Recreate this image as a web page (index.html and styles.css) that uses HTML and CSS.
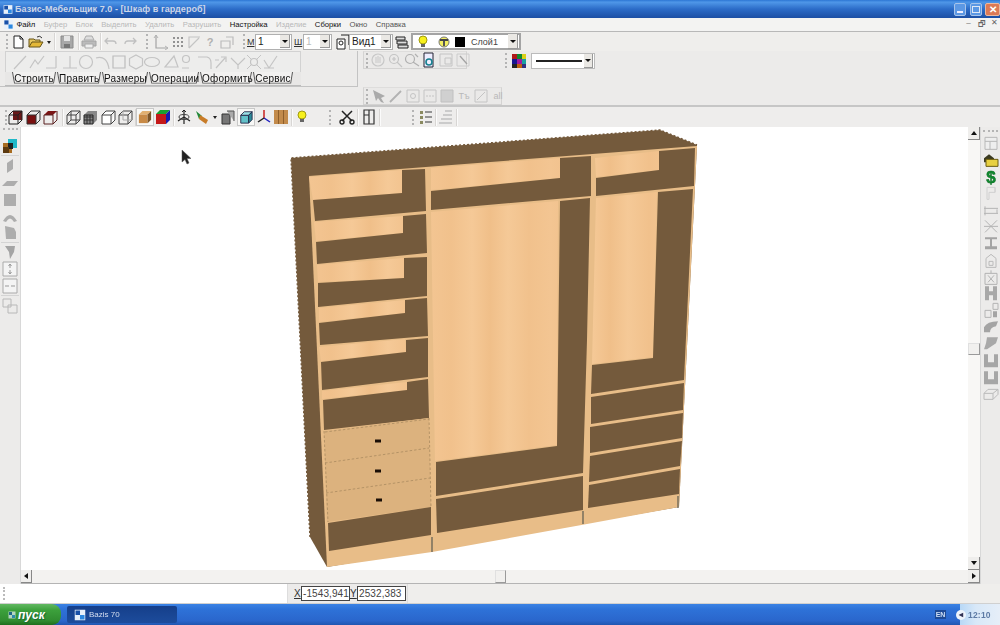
FILE: index.html
```html
<!DOCTYPE html>
<html lang="ru">
<head>
<meta charset="utf-8">
<title>Базис-Мебельщик 7.0</title>
<link rel="stylesheet" href="styles.css">
</head>
<body>
<svg class="defs" width="0" height="0">
  <defs>
    <symbol id="new" viewBox="0 0 16 16"><path d="M4 2h6l3 3v9H4z" fill="#fff" stroke="#222"/><path d="M10 2v3h3" fill="none" stroke="#222"/></symbol>
    <symbol id="open" viewBox="0 0 16 16"><path d="M1 13V5h5l1 1h5v2" fill="#e8c860" stroke="#665518"/><path d="M1 13l3-5h11l-3 5z" fill="#e4b838" stroke="#665518"/><path d="M9 3q3-2 5 1" fill="none" stroke="#333"/></symbol>
    <symbol id="save" viewBox="0 0 16 16"><path d="M2 2h12v12H2z" fill="#a8a8a8" stroke="#8a8a8a"/><path d="M5 2h6v5H5z" fill="#e4e4e4"/><path d="M5 10h6v4H5z" fill="#777"/></symbol>
    <symbol id="print" viewBox="0 0 16 16"><path d="M5 2h6l2 4H3z" fill="#ddd" stroke="#aaa"/><path d="M1 7h14v5H1z" fill="#bbb" stroke="#a4a4a4"/><path d="M4 10h8v4H4z" fill="#eee" stroke="#aaa"/></symbol>
    <symbol id="undo" viewBox="0 0 16 16"><path d="M5 4L2 7l3 3M3 7h7q3 0 3 3" fill="none" stroke="#c0c0c0" stroke-width="1.3"/></symbol>
    <symbol id="redo" viewBox="0 0 16 16"><path d="M11 4l3 3-3 3M13 7H6q-3 0-3 3" fill="none" stroke="#c0c0c0" stroke-width="1.3"/></symbol>
    <symbol id="axes" viewBox="0 0 16 16"><path d="M3 1v13h12" fill="none" stroke="#a4a4a4" stroke-width="1.2"/><path d="M1 4l2-3 2 3M12 12l3 2-3 2" fill="none" stroke="#b4b4b4"/></symbol>
    <symbol id="grid" viewBox="0 0 16 16"><path d="M3 3h2v2H3zm4 0h2v2H7zm4 0h2v2h-2zM3 7h2v2H3zm4 0h2v2H7zm4 0h2v2h-2zM3 11h2v2H3zm4 0h2v2H7zm4 0h2v2h-2z" fill="#929292"/></symbol>
    <symbol id="angle" viewBox="0 0 16 16"><path d="M3 14V3h11M3 14L13 4" fill="none" stroke="#c4c4c4" stroke-width="1.2"/></symbol>
    <symbol id="boxes" viewBox="0 0 16 16"><path d="M2 7h9v7H2zM7 3h7v8" fill="none" stroke="#bcbcbc" stroke-width="1.2"/></symbol>
    <symbol id="copyv" viewBox="0 0 16 16"><path d="M2 5h8v10H2z" fill="#fff" stroke="#222"/><path d="M6 1h8v10" fill="none" stroke="#222" stroke-width="1.2"/><circle cx="6" cy="9" r="2" fill="none" stroke="#222"/></symbol>
    <symbol id="layers" viewBox="0 0 16 16"><path d="M2 3h9v3H2zM3 7h10v3H3zM4 11h10v3H4z" fill="#ddd" stroke="#222"/></symbol>
    <symbol id="bulb" viewBox="0 0 16 16"><circle cx="8" cy="6" r="4" fill="#f7f01c" stroke="#a09a10"/><path d="M6 10h4v3H6z" fill="#666"/></symbol>
    <symbol id="bulb2" viewBox="0 0 16 16"><circle cx="8" cy="8" r="5" fill="#f3ee60" stroke="#777"/><path d="M4 5h8v2H4z" fill="#444"/><path d="M7 7h2v5H7z" fill="#555"/></symbol>
    <symbol id="black" viewBox="0 0 16 16"><path d="M3 3h10v10H3z" fill="#000"/></symbol>
    <symbol id="palette" viewBox="0 0 16 16"><path d="M1 1h5v5H1z" fill="#b01818"/><path d="M6 1h5v5H6z" fill="#108830"/><path d="M11 1h4v5h-4z" fill="#dcd018"/><path d="M1 6h5v5H1z" fill="#161690"/><path d="M6 6h5v5H6z" fill="#a018a0"/><path d="M11 6h4v5h-4z" fill="#18a0a0"/><path d="M1 11h5v4H1z" fill="#222"/><path d="M6 11h5v4H6z" fill="#c06010"/><path d="M11 11h4v4h-4z" fill="#303080"/></symbol>
    <symbol id="t-line" viewBox="0 0 16 16"><path d="M2 15L14 2" fill="none" stroke="#c4c4c4" stroke-width="1.2"/></symbol>
    <symbol id="t-zig" viewBox="0 0 16 16"><path d="M1 14l5-8 3 4 6-8" fill="none" stroke="#c4c4c4" stroke-width="1.2"/></symbol>
    <symbol id="t-under" viewBox="0 0 16 16"><path d="M1 14h10M11 2v12" fill="none" stroke="#c4c4c4" stroke-width="1.2"/></symbol>
    <symbol id="t-perp" viewBox="0 0 16 16"><path d="M1 14h14M8 2v12" fill="none" stroke="#c4c4c4" stroke-width="1.2"/></symbol>
    <symbol id="t-circ" viewBox="0 0 16 16"><circle cx="8" cy="8" r="6.5" fill="none" stroke="#c4c4c4" stroke-width="1.2"/></symbol>
    <symbol id="t-arc" viewBox="0 0 16 16"><path d="M1 4q11-3 13 11" fill="none" stroke="#c4c4c4" stroke-width="1.2"/></symbol>
    <symbol id="t-sq" viewBox="0 0 16 16"><path d="M2 2h12v12H2z" fill="none" stroke="#bcbcbc" stroke-width="1.2"/></symbol>
    <symbol id="t-hex" viewBox="0 0 16 16"><path d="M8 1l6.500 3.500v7L8 15l-6.500-3.500v-7z" fill="none" stroke="#c4c4c4" stroke-width="1.2"/></symbol>
    <symbol id="t-ell" viewBox="0 0 16 16"><ellipse cx="8" cy="8" rx="7.500" ry="4.500" fill="none" stroke="#c4c4c4" stroke-width="1.2"/></symbol>
    <symbol id="t-poly" viewBox="0 0 16 16"><path d="M1 13L10 2l4 11z" fill="none" stroke="#c4c4c4" stroke-width="1.2"/></symbol>
    <symbol id="t-sm" viewBox="0 0 16 16"><circle cx="6" cy="5" r="3.500" fill="none" stroke="#c4c4c4" stroke-width="1.2"/><path d="M2 14h7" stroke="#c4c4c4"/></symbol>
    <symbol id="t-cor" viewBox="0 0 16 16"><path d="M1 3h9q4 1 4 6v6" fill="none" stroke="#c4c4c4" stroke-width="1.2"/></symbol>
    <symbol id="t-ar" viewBox="0 0 16 16"><path d="M3 14L12 4M8 3h5v5M2 6h4" fill="none" stroke="#c4c4c4" stroke-width="1.2"/></symbol>
    <symbol id="t-y" viewBox="0 0 16 16"><path d="M1 4l7 7 7-7M8 11v4" fill="none" stroke="#c4c4c4" stroke-width="1.2"/></symbol>
    <symbol id="t-star" viewBox="0 0 16 16"><circle cx="8" cy="8" r="3.500" fill="none" stroke="#c4c4c4" stroke-width="1.2"/><path d="M1 1l4 4M15 1l-4 4M1 15l4-4M15 15l-4-4" stroke="#c4c4c4"/></symbol>
    <symbol id="t-chk" viewBox="0 0 16 16"><path d="M1 6l5 8L14 2M1 14h10" fill="none" stroke="#c4c4c4" stroke-width="1.2"/></symbol>
    <symbol id="z-hand" viewBox="0 0 16 16"><circle cx="8" cy="8" r="6" fill="none" stroke="#c8c8c8" stroke-width="1.2"/><path d="M6 5v6M8 4v7M10 5v6" stroke="#c8c8c8"/></symbol>
    <symbol id="z-plus" viewBox="0 0 16 16"><circle cx="7" cy="7" r="4.500" fill="none" stroke="#c4c4c4" stroke-width="1.2"/><path d="M10 10l5 5M5 7h4M7 5v4" stroke="#c4c4c4" stroke-width="1.2"/></symbol>
    <symbol id="z-minus" viewBox="0 0 16 16"><circle cx="6" cy="7" r="4.500" fill="none" stroke="#b0b0b0" stroke-width="1.2"/><path d="M9 10l6 4M11 2l3 3" stroke="#b0b0b0" stroke-width="1.2"/></symbol>
    <symbol id="z-page" viewBox="0 0 16 16"><path d="M3 1h9v14H3z" fill="#eef" stroke="#223"/><circle cx="8" cy="10" r="3" fill="none" stroke="#168090" stroke-width="1.6"/></symbol>
    <symbol id="z-doc" viewBox="0 0 16 16"><path d="M2 2h12v12H2z" fill="none" stroke="#c4c4c4"/><path d="M7 6h6v6H7z" fill="none" stroke="#c4c4c4"/></symbol>
    <symbol id="z-pen" viewBox="0 0 16 16"><path d="M2 2h12v12H2z" fill="none" stroke="#cccccc"/><path d="M5 4l7 8" stroke="#a4a4a4" stroke-width="1.4"/></symbol>
    <symbol id="s-arrow" viewBox="0 0 16 16"><path d="M2 2l12 6-4 2 3 5-3-1-3-4-2 3z" fill="#aaaaaa"/></symbol>
    <symbol id="s-pen" viewBox="0 0 16 16"><path d="M2 14L13 3" stroke="#b2b2b2" stroke-width="1.800"/></symbol>
    <symbol id="s-box" viewBox="0 0 16 16"><path d="M2 2h12v12H2z" fill="none" stroke="#c4c4c4"/><circle cx="8" cy="8" r="2.500" fill="none" stroke="#c4c4c4"/></symbol>
    <symbol id="s-dash" viewBox="0 0 16 16"><path d="M2 2h12v12H2z" fill="none" stroke="#c4c4c4"/><path d="M4 8h8" stroke="#c4c4c4" stroke-dasharray="2 1"/></symbol>
    <symbol id="s-hatch" viewBox="0 0 16 16"><path d="M2 2h12v12H2z" fill="#d0d0d0" stroke="#c0c0c0"/></symbol>
    <symbol id="s-size" viewBox="0 0 16 16"><path d="M2 2h12v12H2z" fill="none" stroke="#c4c4c4"/><path d="M4 12l8-8" stroke="#c4c4c4"/></symbol>
    <symbol id="c-a" viewBox="0 0 16 16"><path d="M6 2h9v9H6z" fill="#6a1818"/><path d="M2 6h9v9H2zM2 6l4-4h9l-4 4M11 15l4-4V2" fill="none" stroke="#222"/></symbol>
    <symbol id="c-b" viewBox="0 0 16 16"><path d="M2 6h9v9H2z" fill="#7a1010"/><path d="M2 6h9v9H2zM2 6l4-4h9l-4 4M11 15l4-4V2" fill="none" stroke="#333"/></symbol>
    <symbol id="c-c" viewBox="0 0 16 16"><path d="M2 6l4-4h9l-4 4z" fill="#7a1414"/><path d="M2 6h9v9H2zM11 15l4-4V2" fill="none" stroke="#5a2020"/></symbol>
    <symbol id="c-d" viewBox="0 0 16 16"><path d="M2 6h9v9H2zM2 6l4-4h9l-4 4M11 15l4-4V2M6 2v9h9M2 15l4-4" fill="none" stroke="#444"/></symbol>
    <symbol id="c-e" viewBox="0 0 16 16"><path d="M2 6l4-4h9v9l-4 4H2z" fill="#888"/><path d="M2 8h9M2 11h9M5 6v9M8 6v9" stroke="#333"/><path d="M2 6h9v9H2z" fill="none" stroke="#222"/></symbol>
    <symbol id="c-f" viewBox="0 0 16 16"><path d="M2 6h9v9H2zM2 6l4-4h9l-4 4M11 15l4-4V2" fill="#fff" stroke="#444"/></symbol>
    <symbol id="c-g" viewBox="0 0 16 16"><path d="M2 6h9v9H2zM2 6l4-4h9l-4 4M11 15l4-4V2" fill="none" stroke="#444"/><path d="M6 2v9h9" fill="none" stroke="#aaa"/></symbol>
    <symbol id="c-wood" viewBox="0 0 16 16"><path d="M1 5h10v10H1z" fill="#c88a46"/><path d="M1 5l4-4h10l-4 4z" fill="#e2b070"/><path d="M11 5l4-4v10l-4 4z" fill="#7c5528"/></symbol>
    <symbol id="c-rgb" viewBox="0 0 16 16"><path d="M1 5h10v10H1z" fill="#c41818"/><path d="M1 5l4-4h10l-4 4z" fill="#18a030"/><path d="M11 5l4-4v10l-4 4z" fill="#1818b0"/></symbol>
    <symbol id="c-nav" viewBox="0 0 16 16"><path d="M8 1v14M2 12l6-4 6 4" fill="none" stroke="#222" stroke-width="1.2"/><path d="M6 3l2-2 2 2" fill="none" stroke="#222"/><ellipse cx="8" cy="8" rx="5" ry="2.500" fill="none" stroke="#444"/></symbol>
    <symbol id="c-brush" viewBox="0 0 16 16"><path d="M2 2l6 5-3 3z" fill="#208838"/><path d="M6 6l8 5-2 4-7-5z" fill="#c87c28"/></symbol>
    <symbol id="c-stack" viewBox="0 0 16 16"><path d="M2 5h8v10H2z" fill="#777" stroke="#333"/><path d="M7 2h7v10" fill="#aaa" stroke="#555"/></symbol>
    <symbol id="c-cyan" viewBox="0 0 16 16"><path d="M2 6h9v9H2z" fill="#62c0c8" stroke="#224"/><path d="M2 6l4-4h9l-4 4z" fill="#9ae0e6" stroke="#224"/><path d="M11 6l4-4v9l-4 4z" fill="#2c8a98" stroke="#224"/></symbol>
    <symbol id="c-xyz" viewBox="0 0 16 16"><path d="M8 9V1" stroke="#c82020" stroke-width="1.5"/><path d="M8 9l6 4" stroke="#2020c0" stroke-width="1.5"/><path d="M8 9l-6 4" stroke="#222" stroke-width="1.5"/></symbol>
    <symbol id="c-pan" viewBox="0 0 16 16"><path d="M1 1h14v14H1z" fill="#c28a4a"/><path d="M5 1h1v14H5zM10 1h1v14h-1z" fill="#8e5e2a"/></symbol>
    <symbol id="cut" viewBox="0 0 16 16"><path d="M3 2l10 10M13 2L3 12" stroke="#222" stroke-width="1.500"/><circle cx="3" cy="13" r="2" fill="none" stroke="#222" stroke-width="1.400"/><circle cx="13" cy="13" r="2" fill="none" stroke="#222" stroke-width="1.400"/></symbol>
    <symbol id="door" viewBox="0 0 16 16"><path d="M3 1h10v14H3zM8 1v14M3 6h5" fill="none" stroke="#333" stroke-width="1.200"/></symbol>
    <symbol id="list1" viewBox="0 0 16 16"><path d="M2 2h3v3H2zM2 7h3v3H2zM2 12h3v3H2z" fill="#8a8a60"/><path d="M7 3h7M7 8h7M7 13h7" stroke="#777" stroke-width="1.400"/></symbol>
    <symbol id="list2" viewBox="0 0 16 16"><path d="M7 2h7M5 6h9M3 10h11M1 14h13" stroke="#c0c0c0" stroke-width="1.400"/></symbol>
    <symbol id="l-color" viewBox="0 0 16 16"><path d="M6 1h9v9H6z" fill="#20b8c8"/><path d="M1 5h9v10H1z" fill="#a86c20"/><path d="M6 5h5v6H6z" fill="#222"/><path d="M1 9h6v6H1z" fill="#5c3a10"/></symbol>
    <symbol id="l-v" viewBox="0 0 16 16"><path d="M5 5l6-4v10l-6 4z" fill="#adadad"/></symbol>
    <symbol id="l-h" viewBox="0 0 16 16"><path d="M0 12l5-5h11l-4 5z" fill="#adadad"/></symbol>
    <symbol id="l-sq" viewBox="0 0 16 16"><path d="M2 3h12v12H2z" fill="#adadad"/></symbol>
    <symbol id="l-arc" viewBox="0 0 16 16"><path d="M1 13q7-12 14 0l-3 1q-4-7-8 0z" fill="#adadad"/></symbol>
    <symbol id="l-page" viewBox="0 0 16 16"><path d="M3 2l9 2 2 4v7H4z" fill="#adadad"/></symbol>
    <symbol id="l-fun" viewBox="0 0 16 16"><path d="M3 2h10l-1 6-4 7-1-7z" fill="#a4a4a4"/></symbol>
    <symbol id="l-ud" viewBox="0 0 16 16"><path d="M1 1h14v14H1z" fill="#f4f4f4" stroke="#aaa"/><path d="M8 3v4M8 9v4M6.500 5l1.500-2 1.500 2M6.500 11l1.500 2 1.500-2" fill="none" stroke="#999"/></symbol>
    <symbol id="l-lr" viewBox="0 0 16 16"><path d="M1 1h14v14H1z" fill="#f4f4f4" stroke="#aaa"/><path d="M3 8h4M9 8h4" stroke="#999"/></symbol>
    <symbol id="l-fl" viewBox="0 0 16 16"><path d="M1 1h8v8H1zM6 7h9v8H6z" fill="none" stroke="#b8b8b8"/></symbol>
    <symbol id="r-tab" viewBox="0 0 16 16"><path d="M2 2h12v12H2z" fill="#eee" stroke="#b8b8b8"/><path d="M2 6h12M7 6v8" stroke="#b8b8b8"/></symbol>
    <symbol id="r-fold" viewBox="0 0 16 16"><path d="M1 6l5-4 5 4v4H1z" fill="#3b3a20"/><path d="M3 7h12v7H3z" fill="#e8d040" stroke="#6a5c10"/></symbol>
    <symbol id="r-dollar" viewBox="0 0 16 16"><text x="8" y="14.500" text-anchor="middle" class="dollar">$</text></symbol>
    <symbol id="r-r" viewBox="0 0 16 16"><path d="M4 2h8v5H6v7H4zM12 2v5" fill="none" stroke="#d0d0d0"/></symbol>
    <symbol id="r-bolt" viewBox="0 0 16 16"><path d="M1 6h14M1 11h14M2 4v9M14 7v4" fill="none" stroke="#b4b4b4"/></symbol>
    <symbol id="r-x" viewBox="0 0 16 16"><path d="M2 2l12 12M14 2L2 14M1 8h14" stroke="#b4b4b4"/></symbol>
    <symbol id="r-bars" viewBox="0 0 16 16"><path d="M2 2h12v2H2zM7 4h2v7H7zM2 11h12v3H2z" fill="#a4a4a4"/></symbol>
    <symbol id="r-house" viewBox="0 0 16 16"><path d="M3 15V6l5-4 5 4v9zM6 9h4v4H6z" fill="none" stroke="#bababa"/></symbol>
    <symbol id="r-cross" viewBox="0 0 16 16"><path d="M2 4h12v11H2zM5 6l6 7M11 6l-6 7M8 1v3" fill="none" stroke="#b2b2b2"/></symbol>
    <symbol id="r-h" viewBox="0 0 16 16"><path d="M2 1h4v14H2zM10 1h4v14h-4zM6 6h4v4H6z" fill="#a8a8a8"/></symbol>
    <symbol id="r-mix" viewBox="0 0 16 16"><path d="M2 8h6v7H2z" fill="none" stroke="#b4b4b4"/><path d="M10 1h5v6h-5z" fill="none" stroke="#b4b4b4"/><path d="M10 9h4v6h-4z" fill="#a4a4a4"/></symbol>
    <symbol id="r-s1" viewBox="0 0 16 16"><path d="M1 8q3-6 14-6l-2 5q-6 1-6 6H1z" fill="#a4a4a4"/></symbol>
    <symbol id="r-s2" viewBox="0 0 16 16"><path d="M4 2h11l-2 6-9 6H1l2-6z" fill="#a8a8a8"/></symbol>
    <symbol id="r-u" viewBox="0 0 16 16"><path d="M1 2h4v8h6V2h4v13H1z" fill="#a6a6a6"/></symbol>
    <symbol id="r-box" viewBox="0 0 16 16"><path d="M1 8h9v6H1zM1 8l4-4h10l-5 4M10 14l5-5V4" fill="none" stroke="#bababa"/></symbol>
    <symbol id="win" viewBox="0 0 16 16"><path d="M1 1h14v14H1z" fill="#e8f0fa"/><path d="M2 2h6v6H2z" fill="#1850a8"/><path d="M8 8h6v6H8z" fill="#2c88e0"/></symbol>
  </defs>
</svg>

<div class="app">
  <header class="title">
    <svg class="i t-ico"><use href="#win"/></svg>
    <span class="title-text">Базис-Мебельщик 7.0 - [Шкаф в гардероб]</span>
    <span class="win-btns">
      <span class="wb"><span class="wb-min"></span></span>
      <span class="wb"><span class="wb-max"></span></span>
      <span class="wb wb-close">✕</span>
    </span>
  </header>

  <nav class="menu">
    <svg class="i m-ico"><use href="#win"/></svg>
    <span class="on first">Файл</span><span>Буфер</span><span>Блок</span><span>Выделить</span><span>Удалить</span><span>Разрушить</span><span class="on">Настройка</span><span>Изделие</span><span class="on">Сборки</span><span class="semi">Окно</span><span class="semi">Справка</span>
    <span class="doc-btns"><i>–</i><i>🗗</i><i>✕</i></span>
  </nav>

  <div class="row1">
    <b class="grip"></b>
    <svg class="i m2"><use href="#new"/></svg>
    <svg class="i m2"><use href="#open"/></svg>
    <span class="drop"></span>
    <b class="sep"></b>
    <svg class="i m4-s"><use href="#save"/></svg>
    <b class="sep m3"></b>
    <svg class="i m2"><use href="#print"/></svg>
    <b class="sep m3"></b>
    <svg class="i m2"><use href="#undo"/></svg>
    <svg class="i m3"><use href="#redo"/></svg>
    <b class="grip m8"></b>
    <svg class="i m5"><use href="#axes"/></svg>
    <svg class="i m1"><use href="#grid"/></svg>
    <svg class="i"><use href="#angle"/></svg>
    <span class="q">?</span>
    <svg class="i m1"><use href="#boxes"/></svg>
    <b class="grip m8"></b>
    <u class="lab">М</u>
    <span class="combo c36"><span>1</span><i></i></span>
    <u class="lab m5">Ш</u>
    <span class="combo c29 dis"><span>1</span><i></i></span>
    <svg class="i m3"><use href="#copyv"/></svg>
    <span class="combo c43"><span>Вид1</span><i></i></span>
    <svg class="i m1"><use href="#layers"/></svg>
    <span class="layer">
      <svg class="i m2"><use href="#bulb"/></svg>
      <svg class="i m5"><use href="#bulb2"/></svg>
      <svg class="i"><use href="#black"/></svg>
      <span class="layer-name">Слой1</span>
      <i></i>
    </span>
  </div>

  <section class="tools">
    <div class="tabs-panel">
      <div class="shape-row">
        <svg class="i"><use href="#t-line"/></svg><svg class="i"><use href="#t-zig"/></svg><svg class="i"><use href="#t-under"/></svg><svg class="i"><use href="#t-perp"/></svg><svg class="i"><use href="#t-circ"/></svg><svg class="i"><use href="#t-arc"/></svg><svg class="i"><use href="#t-sq"/></svg><svg class="i"><use href="#t-hex"/></svg><svg class="i"><use href="#t-ell"/></svg><svg class="i m3"><use href="#t-poly"/></svg><svg class="i"><use href="#t-sm"/></svg><svg class="i"><use href="#t-cor"/></svg><svg class="i"><use href="#t-ar"/></svg><svg class="i"><use href="#t-y"/></svg><svg class="i"><use href="#t-star"/></svg><svg class="i"><use href="#t-chk"/></svg>
      </div>
      <div class="tabs">
        <span class="tab t40">Строить</span><span class="tab t40">Править</span><span class="tab t42">Размеры</span><span class="tab t46">Операции</span><span class="tab t48">Оформить</span><span class="tab t35">Сервис</span>
      </div>
    </div>
    <div class="float-col">
      <div class="float-top">
        <div class="float zoomb">
          <b class="grip"></b>
          <svg class="i m1"><use href="#z-hand"/></svg>
          <svg class="i"><use href="#z-plus"/></svg>
          <svg class="i"><use href="#z-minus"/></svg>
          <svg class="i"><use href="#z-page"/></svg>
          <svg class="i"><use href="#z-doc"/></svg>
          <svg class="i"><use href="#z-pen"/></svg>
        </div>
        <div class="colorb">
          <b class="grip"></b>
          <svg class="i pal"><use href="#palette"/></svg>
          <span class="linebox"><span class="lineval"></span><i></i></span>
        </div>
      </div>
      <div class="float snapb">
        <b class="grip"></b>
        <svg class="i m2"><use href="#s-arrow"/></svg>
        <svg class="i"><use href="#s-pen"/></svg>
        <svg class="i"><use href="#s-box"/></svg>
        <svg class="i"><use href="#s-dash"/></svg>
        <svg class="i"><use href="#s-hatch"/></svg>
        <span class="q tb">Тъ</span>
        <svg class="i"><use href="#s-size"/></svg>
        <span class="q all">all</span>
      </div>
    </div>
  </section>

  <div class="row3">
    <b class="grip"></b>
    <svg class="i"><use href="#c-a"/></svg><svg class="i m2"><use href="#c-b"/></svg><svg class="i m1"><use href="#c-c"/></svg>
    <b class="sep m4"></b>
    <svg class="i m2"><use href="#c-d"/></svg><svg class="i m1"><use href="#c-e"/></svg><svg class="i m2"><use href="#c-f"/></svg><svg class="i m1"><use href="#c-g"/></svg>
    <b class="sep m2"></b>
    <span class="press"><svg class="i"><use href="#c-wood"/></svg></span><svg class="i m1"><use href="#c-rgb"/></svg>
    <b class="sep m2"></b>
    <svg class="i m2"><use href="#c-nav"/></svg><svg class="i m2"><use href="#c-brush"/></svg><span class="drop"></span><svg class="i"><use href="#c-stack"/></svg>
    <span class="press m1"><svg class="i"><use href="#c-cyan"/></svg></span><svg class="i m1"><use href="#c-xyz"/></svg><svg class="i m1"><use href="#c-pan"/></svg>
    <b class="sep m2"></b>
    <svg class="i m2"><use href="#bulb"/></svg>
    <b class="grip g1"></b>
    <svg class="i m8"><use href="#cut"/></svg>
    <b class="sep m2"></b>
    <svg class="i m3"><use href="#door"/></svg>
    <b class="sep m2"></b>
    <b class="grip g2"></b>
    <svg class="i m4"><use href="#list1"/></svg>
    <b class="sep m1"></b>
    <svg class="i m2"><use href="#list2"/></svg>
    <b class="sep m2"></b>
  </div>

  <main class="work">
    <aside class="lbar">
      <b class="hgrip"></b>
      <svg class="i"><use href="#l-color"/></svg>
      <b class="hsep"></b>
      <svg class="i"><use href="#l-v"/></svg>
      <svg class="i"><use href="#l-h"/></svg>
      <svg class="i"><use href="#l-sq"/></svg>
      <svg class="i"><use href="#l-arc"/></svg>
      <svg class="i"><use href="#l-page"/></svg>
      <b class="hsep"></b>
      <svg class="i"><use href="#l-fun"/></svg>
      <svg class="i"><use href="#l-ud"/></svg>
      <svg class="i"><use href="#l-lr"/></svg>
      <b class="hsep"></b>
      <svg class="i"><use href="#l-fl"/></svg>
    </aside>

    <div class="center">
      <div class="view-row">
        <svg class="view" viewBox="21 127 947 443" width="947" height="443">
          <defs>
            <linearGradient id="wood" gradientUnits="userSpaceOnUse" x1="430" y1="0" x2="490" y2="0" spreadMethod="reflect">
              <stop offset="0" stop-color="#f3c592"/>
              <stop offset=".35" stop-color="#f1c18c"/>
              <stop offset=".7" stop-color="#f5c997"/>
              <stop offset="1" stop-color="#f0bf89"/>
            </linearGradient>
          </defs>
          <g class="cab">
            <path class="dark" d="M291 158L660 130 697 145 679 507 327 567 310 537z"/>
            <path class="scallop" d="M310 537L291 158 660 130 697 145"/>
            <path class="edge" d="M309 176L697 146 679 507 587 524 432 552 327 567z"/>

            <path class="back" d="M309 177L402 170V193L313 200z"/>
            <path class="dark" d="M402 170L425 169 426 211 315 221 313 200 402 193z"/>
            <path class="back" d="M314 222L403 216V233L316 241z"/>
            <path class="dark" d="M403 216L426 214 427 253 317 264 316 242 403 233z"/>
            <path class="back" d="M317 265L404 258V278L318 282z"/>
            <path class="dark" d="M404 258L427 257 427 296 318 307 318 283 404 278z"/>
            <path class="back" d="M319 308L405 300V313L319 322z"/>
            <path class="dark" d="M405 300L427 298 428 336 320 345 319 323 405 313z"/>
            <path class="back" d="M319 347L405 339 406 352 321 361z"/>
            <path class="dark" d="M406 340L428 338 428 377 322 390 321 362 406 352z"/>
            <path class="back" d="M322 391L407 382V390L322 399z"/>
            <path class="dark" d="M407 382L428 379 429 418 324 430 323 400 407 390z"/>

            <path class="front" d="M324 431L429 418 431 507 327 522z"/>
            <path class="dash" d="M325 463L429 448M326 493L430 478M325 432L429 419M324 431L328 522M429 418L431 507"/>
            <path class="knob" d="M375 439.500h6v3h-6zM375 469.500h6v3h-6zM376 498.500h6v3h-6z"/>
            <path class="dark" d="M328 523L431 507 431 535 329 551z"/>

            <path class="back" d="M431 168L560 158V178L431 190z"/>
            <path class="dark" d="M431 191L560 178V158L591 156 591 196 431 210z"/>
            <path class="back" d="M431 212L558 201 557 445 435 461z"/>
            <path class="dark" d="M560 201L590 198 587 340 583 473 436 496 436 462 557 446z"/>
            <path class="dark" d="M436 499L583 476V510L437 533z"/>

            <path class="back" d="M595 158L659 151V170L596 177z"/>
            <path class="dark" d="M659 151L695 148 694 186 596 196 596 178 659 170z"/>
            <path class="back" d="M596 198L657 192 653 357 592 364z"/>
            <path class="dark" d="M658 192L693 189 684 380 591 394 592 365 653 358z"/>
            <path class="dark" d="M591 397L684 383 683 410 591 424z"/>
            <path class="dark" d="M590 427L683 413 682 438 590 453z"/>
            <path class="dark" d="M590 456L682 441 680 466 589 482z"/>
            <path class="dark" d="M589 485L680 469 679 494 588 508z"/>

            <path class="pin" d="M583 511V524M432 537V552M678 496V508"/>
          </g>
          <path class="cursor" d="M182 150V162L185 159.500 187 164 189 163 187 158.500H191z"/>
        </svg>
        <div class="vscroll">
          <span class="sbtn"><i class="up"></i></span>
          <span class="thumb vthumb"></span>
          <span class="sbtn sb-end"><i class="down"></i></span>
        </div>
      </div>
      <div class="hscroll">
        <span class="sbtn"><i class="left"></i></span>
        <span class="thumb hthumb"></span>
        <span class="sbtn sb-end"><i class="right"></i></span>
      </div>
    </div>

    <aside class="rbar">
      <b class="hgrip"></b>
      <svg class="i"><use href="#r-tab"/></svg>
      <svg class="i"><use href="#r-fold"/></svg>
      <svg class="i"><use href="#r-dollar"/></svg>
      <svg class="i"><use href="#r-r"/></svg>
      <svg class="i"><use href="#r-bolt"/></svg>
      <svg class="i"><use href="#r-x"/></svg>
      <svg class="i"><use href="#r-bars"/></svg>
      <svg class="i"><use href="#r-house"/></svg>
      <svg class="i"><use href="#r-cross"/></svg>
      <svg class="i"><use href="#r-h"/></svg>
      <svg class="i"><use href="#r-mix"/></svg>
      <svg class="i"><use href="#r-s1"/></svg>
      <svg class="i"><use href="#r-s2"/></svg>
      <svg class="i"><use href="#r-u"/></svg>
      <svg class="i"><use href="#r-u"/></svg>
      <svg class="i"><use href="#r-box"/></svg>
    </aside>
  </main>

  <footer class="status">
    <div class="st-left"><b class="vgrip"></b></div>
    <div class="coords">
      <u>X</u><span class="val">-1543,941</span><u>Y</u><span class="val">2532,383</span>
    </div>
  </footer>

  <div class="taskbar">
    <span class="start"><svg class="i s-logo"><use href="#win"/></svg><em>пуск</em></span>
    <span class="task"><svg class="i"><use href="#win"/></svg><span>Bazis 70</span></span>
    <span class="tray-lang">EN</span>
    <span class="tray">
      <span class="speaker">◂</span>
      <span>12:10</span>
    </span>
  </div>
</div>
</body>
</html>
```

FILE: styles.css
```css
* { box-sizing: border-box; }
html, body { margin: 0; padding: 0; }
body { width: 1000px; height: 625px; overflow: hidden; background: #ecebea; font-family: "Liberation Sans", Arial, sans-serif; }
.defs { display: block; height: 0; }
.app { width: 1000px; height: 625px; display: flex; flex-direction: column; filter: blur(0.5px); overflow: hidden; }
.i { width: 16px; height: 16px; flex: none; display: block; }
i, u, b, em { font-style: normal; font-weight: normal; }
.m1 { margin-left: 1px; } .m2 { margin-left: 2px; } .m3 { margin-left: 3px; } .m4 { margin-left: 4px; } .m4-s { margin-left: 4px; } .m5 { margin-left: 5px; } .m8 { margin-left: 8px; }
.grip { flex: none; width: 2px; height: 15px; border-left: 2px dotted #b4b4b4; }
.sep { flex: none; width: 1px; height: 17px; background: #d8d6d4; box-shadow: 1px 0 #fbfbfb; }

.title { height: 18px; flex: none; display: flex; align-items: center; padding-left: 3px; background: linear-gradient(#2c76d4 0, #4f97e8 12%, #2c6cc8 50%, #1c4fa4 100%); color: #cdd6e8; }
.t-ico { width: 10px; height: 11px; margin-right: 2px; }
.title-text { font-size: 9px; font-weight: bold; letter-spacing: .05px; white-space: nowrap; }
.win-btns { margin-left: auto; display: flex; gap: 3.5px; }
.wb { width: 12px; height: 13px; background: #5c98e4; border: 1px solid #a8c4ea; border-radius: 2px; display: flex; align-items: center; justify-content: center; }
.wb-min { width: 6px; height: 2px; background: #eef; margin-top: 6px; }
.wb-max { width: 8px; height: 7px; border: 1px solid #dfe8f6; }
.wb-close { width: 15px; background: #dc7a56; border-color: #eab8a0; color: #fff; font-size: 10px; font-weight: bold; }

.menu { height: 14px; flex: none; display: flex; align-items: center; background: #f3f3f2; color: #b8b8b8; font-size: 7.7px; gap: 8.4px; border-bottom: 1px solid #b8b8b8; }
.menu span { white-space: nowrap; }
.m-ico { width: 11px; height: 11px; margin: 0 -6px 0 3px; }
.menu .on { color: #111; }
.menu .semi { color: #555; }
.doc-btns { margin-left: auto; margin-right: -1px; display: flex; color: #666; }
.doc-btns i { width: 13px; text-align: center; font-size: 8px; }

.row1 { height: 19px; flex: none; display: flex; align-items: center; padding-left: 6px; background: #efeeec; }
.drop { flex: none; width: 10px; height: 8px; }
.drop::after { content: ""; display: block; margin: 3px auto 0; width: 0; border: 2.500px solid transparent; border-top: 3px solid #222; }
.q { flex: none; width: 16px; text-align: center; color: #b0b0b0; font-size: 11px; font-weight: bold; }
.lab { flex: none; font-size: 9px; color: #333; margin-left: 2px; width: 8px; }
.combo { flex: none; height: 16px; display: flex; align-items: center; background: #fff; border: 1px solid #b0b0b0; font-size: 10px; color: #222; padding-left: 2px; justify-content: space-between; }
.combo i, .linebox i, .layer > i { flex: none; width: 10px; height: 13px; margin-right: 1px; background: #eae8e4; border-right: 1px solid #999; border-bottom: 1px solid #999; display: flex; align-items: center; justify-content: center; }
.combo i::after, .linebox i::after, .layer > i::after { content: ""; border: 3px solid transparent; border-top: 3px solid #111; border-bottom: 0; }
.c36 { width: 37px; } .c29 { width: 29px; margin-left: 1px; } .c43 { width: 44px; margin-left: -2px; }
.dis { color: #bbb; }
.layer { flex: none; width: 110px; height: 17px; margin-left: 1px; display: flex; align-items: center; background: #fff; border: 2px solid #a4a4a4; font-size: 9px; color: #444; }
.layer-name { margin-left: 3px; }
.layer > i { margin-left: auto; height: 15px; }

.tools { height: 56px; flex: none; display: flex; background: #ecebea; border-bottom: 2px solid #c6c6c6; }
.tabs-panel { flex: none; width: 358px; height: 36px; border-right: 1px solid #c3c3c3; border-bottom: 1px solid #c3c3c3; padding-left: 5px; }
.shape-row { width: 296px; height: 21px; display: flex; align-items: center; padding-left: 6px; gap: .5px; border: 1px solid #d2d2d2; border-bottom: 0; background: #ededec; }
.tabs { position: relative; z-index: 0; width: 296px; height: 14px; display: flex; padding-left: 9px; gap: 5px; border-bottom: 1px solid #bbb; background: #e8e7e6; }
.tab { position: relative; flex: none; font-size: 10px; letter-spacing: .2px; color: #111; height: 13px; line-height: 13px; text-align: center; white-space: nowrap; }
.tab::before { content: ""; position: absolute; inset: 0 -2px 0 -2px; border: 1px solid #555; border-top: 0; border-bottom-width: 1.500px; background: #f2f1f0; transform: perspective(26px) rotateX(-12deg); transform-origin: top; z-index: -1; }
.t40 { width: 40px; } .t42 { width: 42px; } .t46 { width: 46px; } .t48 { width: 48px; } .t35 { width: 36px; }

.float-col { flex: 1; display: flex; flex-direction: column; padding-left: 5px; }
.float-top { display: flex; height: 36px; align-items: flex-start; }
.float { height: 18px; display: flex; align-items: center; gap: 1px; background: #eae9e8; border: 1px solid #d4d3d2; border-top-color: #dedddc; padding-left: 2px; }
.zoomb { width: 104px; }
.colorb { margin-left: 38px; height: 19px; width: 88px; display: flex; align-items: center; gap: 2px; }
.pal { margin-left: 2px; }
.linebox { flex: none; width: 64px; height: 16px; display: flex; align-items: center; margin-left: 2px; background: #fff; border: 1px solid #bbb; }
.lineval { flex: 1; height: 2px; margin: 0 2px 0 4px; background: #222; }
.linebox i { height: 14px; width: 9px; }
.snapb { width: 139px; }
.tb { color: #b8b8b8; font-size: 9px; font-weight: normal; }
.all { color: #b8b8b8; font-size: 9px; font-weight: normal; }

.row3 { height: 20px; flex: none; display: flex; align-items: center; padding-left: 5px; background: #eeedec; }
.press { flex: none; display: block; width: 18px; height: 18px; padding: 1px; background: #f8f8f6; border: 1px solid #c8c8c8; }
.press .i { width: 14px; height: 14px; }
.g1 { margin-left: 19px; }
.g2 { margin-left: 32px; }

.work { flex: 1; min-height: 0; display: flex; }
.lbar { flex: none; width: 21px; background: #ecebea; border-right: 1px solid #d8d8d8; display: flex; flex-direction: column; align-items: center; padding-top: 1px; gap: .6px; }
.hgrip { flex: none; width: 15px; height: 2px; border-top: 2px dotted #b4b4b4; margin-bottom: 7px; }
.hsep { flex: none; width: 18px; height: 1px; margin: 1px 0; background: #d4d4d4; }
.center { flex: none; width: 959px; display: flex; flex-direction: column; }
.view-row { display: flex; height: 443px; }
.view { display: block; flex: none; background: #fff; }
.vscroll { flex: none; width: 12px; background: #f8f7f5; display: flex; flex-direction: column; }
.sbtn { flex: none; width: 12px; height: 13px; background: #efeeec; border-right: 1px solid #888; border-bottom: 1px solid #888; display: flex; align-items: center; justify-content: center; }
.sbtn i { width: 0; height: 0; border: 3px solid transparent; }
.sbtn .up { border-bottom: 4px solid #111; border-top: 0; }
.sbtn .down { border-top: 4px solid #111; border-bottom: 0; }
.sbtn .left { border-right: 4px solid #111; border-left: 0; }
.sbtn .right { border-left: 4px solid #111; border-right: 0; }
.thumb { flex: none; background: #f1f0ee; border-right: 1px solid #9a9a9a; border-bottom: 1px solid #9a9a9a; border-top: 1px solid #e0e0e0; border-left: 1px solid #e0e0e0; }
.vthumb { width: 12px; height: 12px; margin-top: 203px; }
.vscroll .sb-end { margin-top: auto; }
.hscroll { height: 14px; flex: none; display: flex; background: #f3f2f0; border-bottom: 1px solid #b4b4b4; }
.hscroll .sbtn { height: 13px; width: 11px; }
.hthumb { width: 11px; height: 13px; margin-left: 463px; }
.hscroll .sb-end { width: 12px; margin-left: auto; }
.rbar { flex: none; width: 20px; background: #ecebea; border-left: 1px solid #d8d8d8; display: flex; flex-direction: column; align-items: center; padding-top: 3px; }
.rbar .hgrip { margin-bottom: 3px; }
.rbar .i { height: 16.7px; }
.dollar { font: bold 17px "Liberation Sans", sans-serif; fill: #108a30; stroke: #0a6a20; stroke-width: .5px; }

.cab path { stroke-linejoin: round; }
.dark { fill: #745a3c; }
.scallop { fill: none; stroke: #745a3c; stroke-width: 1.5px; stroke-dasharray: 2 2; }
.edge { fill: #e8bd88; }
.back { fill: url(#wood); }
.front { fill: #dcb27e; }
.dash { fill: none; stroke: #a98a60; stroke-width: .8px; stroke-dasharray: 2.500 2; }
.knob { fill: #1a0e06; }
.pin { fill: none; stroke: #5a5a50; stroke-width: 1.200px; }
.cursor { fill: #222; stroke: #555; stroke-width: .5px; }

.status { height: 20px; flex: none; display: flex; background: #efeeec; border-bottom: 1px solid #d0d0d0; }
.st-left { flex: none; width: 287px; background: #fff; padding: 3px 0 0 3px; }
.vgrip { display: block; width: 2px; height: 13px; border-left: 2px dotted #bbb; }
.coords { flex: none; width: 121px; display: flex; align-items: center; padding-left: 6px; background: #ecebea; font-size: 10px; letter-spacing: .1px; border-left: 1px solid #ddd; border-right: 1px solid #ddd; }
.coords u { flex: none; width: 7px; color: #333; }
.val { flex: none; width: 49px; height: 15px; line-height: 13px; background: #fff; border: 1px solid #444; color: #444; padding-left: 1px; white-space: nowrap; overflow: hidden; }

.taskbar { height: 21px; flex: none; display: flex; align-items: center; background: linear-gradient(#3a82e4, #2e72d8 25%, #2a66cc 80%, #2056b0); color: #fff; }
.start { flex: none; width: 61px; height: 21px; display: flex; align-items: center; padding-left: 8px; gap: 2px; background: linear-gradient(#62b862, #3ca03c 30%, #308c30 80%, #1e6e1e); border-radius: 0 9px 9px 0; }
.s-logo { width: 8px; height: 10px; opacity: .7; }
.start em { font: italic bold 12px "Liberation Sans", sans-serif; text-shadow: 1px 1px 1px #163; }
.task { flex: none; width: 110px; height: 17px; margin-left: 6px; display: flex; align-items: center; gap: 3px; padding-left: 7px; background: linear-gradient(#153f8a, #1d4c9c); border-radius: 2px; font-size: 8px; color: #d4def0; }
.task .i { width: 12px; height: 12px; }
.tray-lang { margin-left: auto; margin-right: 14px; flex: none; width: 11px; height: 9px; background: #1d4a96; font-size: 7px; line-height: 9px; text-align: center; font-weight: bold; color: #cfe0f6; }
.tray { flex: none; width: 40px; height: 21px; padding-left: 5px; display: flex; align-items: center; gap: 2px; background: linear-gradient(90deg, #b8d8f6, #d8e8f8 40%, #e6eef8); color: #5e7ba5; font-size: 8.500px; font-weight: bold; letter-spacing: .2px; }
.speaker { flex: none; width: 10px; height: 10px; margin-left: -9px; line-height: 10px; text-align: center; border-radius: 50%; background: #eef4fb; color: #335; font-size: 8px; }
```
